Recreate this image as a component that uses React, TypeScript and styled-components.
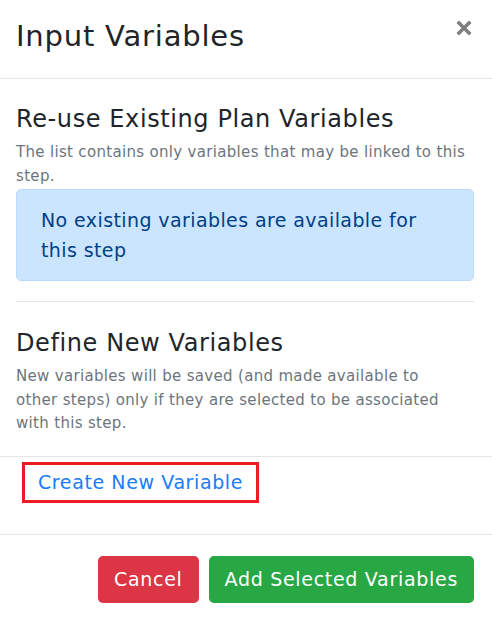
import React from "react";
import styled, { createGlobalStyle } from "styled-components";

const Global = createGlobalStyle`
  html, body { margin: 0; padding: 0; background: #fff; }
  body { font-family: "DejaVu Sans", "Noto Sans", sans-serif; color: #212529; }
  * { box-sizing: border-box; }
`;

const Modal = styled.div`
  width: 492px;
  display: flex;
  flex-direction: column;
`;

const Header = styled.div`
  height: 79px;
  display: flex;
  align-items: flex-start;
  justify-content: space-between;
  padding: 15px 20px 0 16px;
  border-bottom: 1px solid #e5e5e5;
`;

const Title = styled.h4`
  margin: 0;
  font-size: 29px;
  font-weight: 400;
  line-height: 42px;
  letter-spacing: 0.8px;
  color: #212529;
`;

const Close = styled.button`
  border: 0;
  background: none;
  padding: 0;
  margin-top: 5px;
  width: 16px;
  height: 16px;
  display: flex;
  cursor: pointer;
`;

const Body = styled.div`
  padding: 22px 18px 0 16px;
  display: flex;
  flex-direction: column;
`;

const SectionTitle = styled.h5`
  margin: 0 0 4px;
  font-size: 24px;
  font-weight: 400;
  line-height: 36px;
  letter-spacing: 0.6px;
  color: #212529;
`;

const Help = styled.p<{ $maxWidth?: number }>`
  margin: 0;
  max-width: ${(p) => (p.$maxWidth ? `${p.$maxWidth}px` : "none")};
  font-size: 15px;
  line-height: 23.5px;
  letter-spacing: 0.32px;
  color: #6c757d;
`;

const Alert = styled.div`
  margin-top: 1px;
  padding: 15px 24px;
  background: #cce5ff;
  border: 1px solid #b8daff;
  border-radius: 5px;
  color: #004085;
  font-size: 19px;
  line-height: 30px;
  letter-spacing: 0.4px;
`;

const Divider = styled.hr`
  margin: 20px 0 23px;
  border: 0;
  border-top: 1px solid #e5e5e5;
`;

const CreateRow = styled.div`
  margin-top: 20px;
  height: 79px;
  border-top: 1px solid #e5e5e5;
  border-bottom: 1px solid #e5e5e5;
  padding: 5px 0 0 22px;
`;

const Highlight = styled.div`
  display: inline-flex;
  align-items: center;
  height: 41px;
  padding: 0 13px;
  border: 3px solid #ed1c24;
`;

const LinkText = styled.a`
  color: #1a7cf5;
  font-size: 19px;
  letter-spacing: 0.6px;
  text-decoration: none;
  cursor: pointer;
`;

const Footer = styled.div`
  display: flex;
  justify-content: flex-end;
  gap: 10px;
  padding: 21px 18px 0 0;
`;

const Button = styled.button<{ $tone: "danger" | "success" }>`
  height: 47px;
  border: 0;
  border-radius: 5px;
  padding: 0 16px;
  font-family: inherit;
  font-size: 19px;
  letter-spacing: 0.7px;
  color: #fff;
  background: ${(p) => (p.$tone === "danger" ? "#dc3545" : "#28a745")};
  cursor: pointer;
`;

export default function App() {
  return (
    <>
      <Global />
      <Modal>
        <Header>
          <Title>Input Variables</Title>
          <Close aria-label="Close">
            <svg width="16" height="16" viewBox="0 0 16 16">
              <path d="M3 3 L13 13 M13 3 L3 13" stroke="#808080" strokeWidth="3.6" strokeLinecap="square" />
            </svg>
          </Close>
        </Header>
        <Body>
          <SectionTitle>Re-use Existing Plan Variables</SectionTitle>
          <Help>The list contains only variables that may be linked to this step.</Help>
          <Alert>No existing variables are available for this step</Alert>
          <Divider />
          <SectionTitle>Define New Variables</SectionTitle>
          <Help $maxWidth={440}>
            New variables will be saved (and made available to other steps) only if they are selected to be associated
            with this step.
          </Help>
        </Body>
        <CreateRow>
          <Highlight>
            <LinkText>Create New Variable</LinkText>
          </Highlight>
        </CreateRow>
        <Footer>
          <Button $tone="danger">Cancel</Button>
          <Button $tone="success">Add Selected Variables</Button>
        </Footer>
      </Modal>
    </>
  );
}
